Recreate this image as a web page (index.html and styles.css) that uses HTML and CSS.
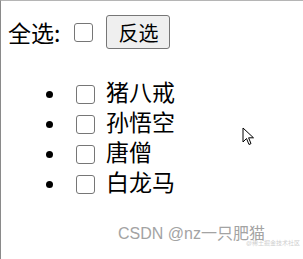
FILE: index.html
```html
<!DOCTYPE html>
<html lang="zh">
  <head>
    <meta charset="UTF-8">
    <title>全选 / 反选</title>
    <link rel="stylesheet" href="styles.css">
  </head>
  <body>
    <div class="toolbar">
      <span class="label">全选:</span>
      <input type="checkbox" class="check" id="all">
      <button class="invert" id="invert">反选</button>
    </div>

    <ul class="names">
      <li><input type="checkbox" class="check">猪八戒</li>
      <li><input type="checkbox" class="check">孙悟空</li>
      <li><input type="checkbox" class="check">唐僧</li>
      <li><input type="checkbox" class="check">白龙马</li>
    </ul>

    <svg class="cursor" width="14" height="20" viewBox="0 0 14 20">
      <path d="M1 1 L1 15 L4.5 11.5 L7 17.5 L9 16.6 L6.6 10.8 L11.5 10.8 Z" fill="#fff" stroke="#000" stroke-width="1" stroke-linejoin="round"/>
    </svg>

    <div class="watermark">
      CSDN @nz一只肥猫
      <span class="sub">@稀土掘金技术社区</span>
    </div>
  </body>
</html>
```

FILE: styles.css
```css
html {
  background: #fff;
  border-left: 1px solid #8a8a8a;
  border-top: 1px solid #b5b5b5;
  height: 100%;
  box-sizing: border-box;
}

body {
  color: #000;
  font-family: "Noto Sans CJK SC", "Noto Sans", sans-serif;
  font-size: 23px;
  margin: 0 0 0 7px;
  position: relative;
  height: 100%;
}

.toolbar {
  align-items: center;
  display: flex;
  height: 38px;
  margin-top: 12px;
}

.label {
  margin-right: 14px;
}

.check {
  appearance: none;
  background: #fff;
  border: 1px solid #767676;
  border-radius: 3px;
  height: 19px;
  margin: 0;
  width: 19px;
}

.toolbar .check {
  margin-right: 13px;
}

.invert {
  background: #efefef;
  border: 1px solid #767676;
  border-radius: 3px;
  color: #000;
  font-family: "Noto Sans CJK SC", sans-serif;
  font-size: 20px;
  height: 34px;
  padding: 0 10px;
  width: 64px;
}

.names {
  list-style: disc;
  margin: 25px 0 0;
  padding-left: 59px;
}

.names li {
  height: 30px;
  line-height: 30px;
}

.names li::marker {
  font-size: 19px;
}

.names .check {
  margin: 0 11px 0 9px;
  vertical-align: -3px;
}

.cursor {
  left: 234px;
  position: absolute;
  top: 126px;
}

.watermark {
  color: #a3a3a3;
  font-family: "Liberation Sans", "Noto Sans CJK SC", sans-serif;
  font-size: 16px;
  left: 110px;
  position: absolute;
  top: 219px;
  white-space: nowrap;
}

.watermark .sub {
  color: #cfcfcf;
  font-size: 6px;
  left: 128px;
  position: absolute;
  top: 18px;
}
```
